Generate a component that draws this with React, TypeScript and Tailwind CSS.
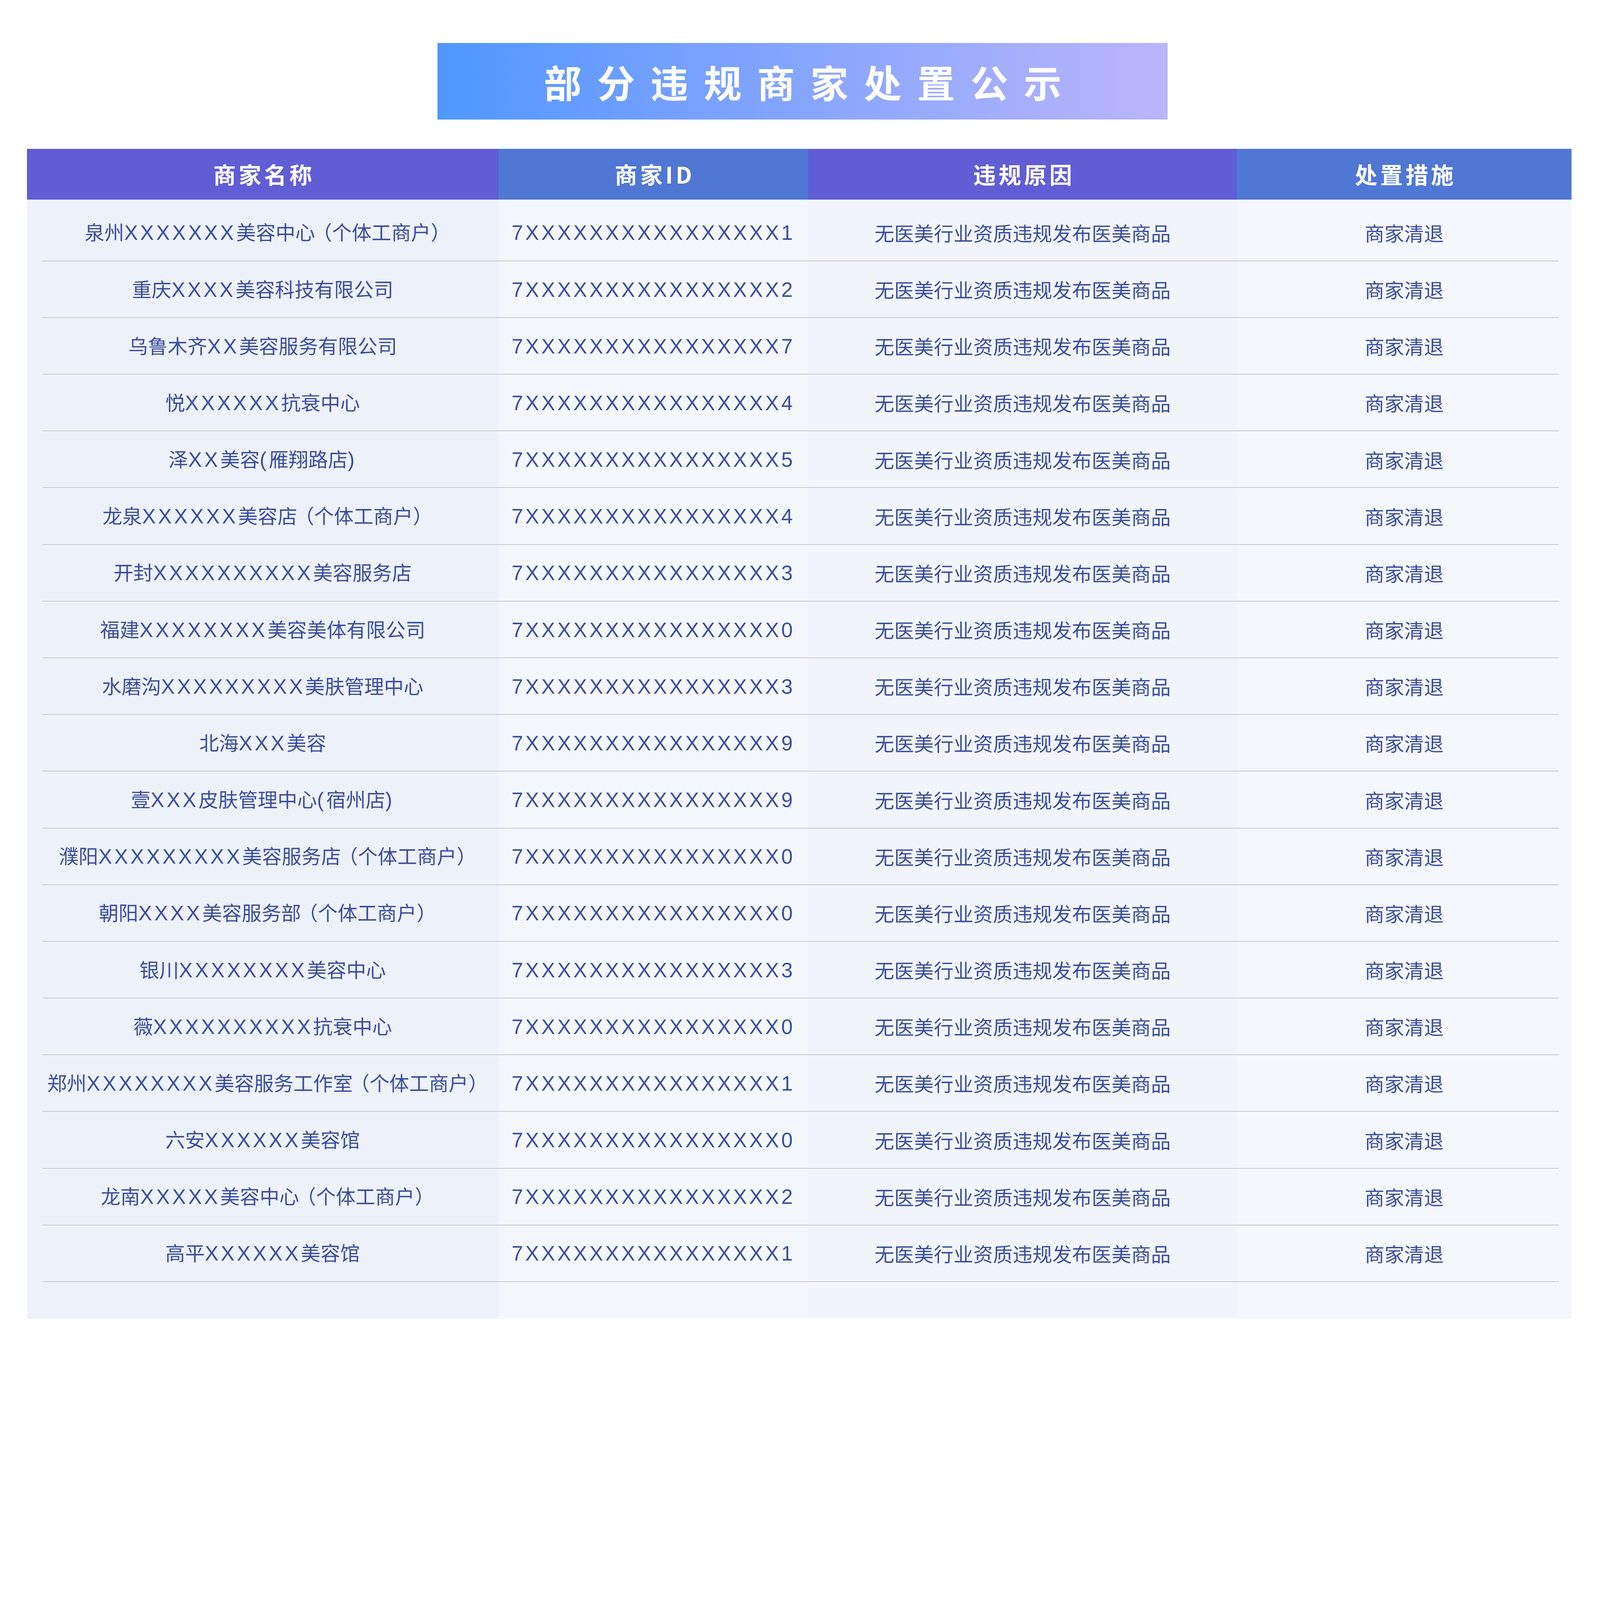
import React from "react";

const names = [
  "泉州XXXXXXX美容中心（个体工商户）",
  "重庆XXXX美容科技有限公司",
  "乌鲁木齐XX美容服务有限公司",
  "悦XXXXXX抗衰中心",
  "泽XX美容(雁翔路店)",
  "龙泉XXXXXX美容店（个体工商户）",
  "开封XXXXXXXXXX美容服务店",
  "福建XXXXXXXX美容美体有限公司",
  "水磨沟XXXXXXXXX美肤管理中心",
  "北海XXX美容",
  "壹XXX皮肤管理中心(宿州店)",
  "濮阳XXXXXXXXX美容服务店（个体工商户）",
  "朝阳XXXX美容服务部（个体工商户）",
  "银川XXXXXXXX美容中心",
  "薇XXXXXXXXXX抗衰中心",
  "郑州XXXXXXXX美容服务工作室（个体工商户）",
  "六安XXXXXX美容馆",
  "龙南XXXXX美容中心（个体工商户）",
  "高平XXXXXX美容馆",
];

const lastDigits = ["1", "2", "7", "4", "5", "4", "3", "0", "3", "9", "9", "0", "0", "3", "0", "1", "0", "2", "1"];

function Mixed({ text }: { text: string }) {
  const parts = text.split(/([\x00-\x7F]+|（|）)/).filter((p) => p.length > 0);
  return (
    <span className="whitespace-nowrap">
      {parts.map((p, i) => {
        if (p === "（") {
          return (
            <span key={i} className="ml-[-10px]">
              {p}
            </span>
          );
        }
        if (p === "）") {
          return (
            <span key={i} className="mr-[-35px]">
              {p}
            </span>
          );
        }
        if (/^[\x00-\x7F]+$/.test(p)) {
          return (
            <span
              key={i}
              className="font-['Liberation_Sans',Arial,sans-serif] text-[73px] tracking-[8px]"
            >
              {p}
            </span>
          );
        }
        return <span key={i}>{p}</span>;
      })}
    </span>
  );
}

const line = "border-b-4 border-[#c9cbce]";

export default function App() {
  const [zoom, setZoom] = React.useState<number>(() =>
    typeof window !== "undefined" ? window.innerWidth / 5671 : 1
  );
  React.useEffect(() => {
    const f = () => setZoom(window.innerWidth / 5671);
    f();
    window.addEventListener("resize", f);
    return () => window.removeEventListener("resize", f);
  }, []);

  return (
    <div className="overflow-hidden">
      <div
        style={{ zoom }}
        className="w-[5671px] h-[4800px] bg-white overflow-hidden font-['Noto_Sans_CJK_SC','Noto_Sans',sans-serif]"
      >
        <div className="pt-[152px]">
          <div className="ml-[1551px] w-[2588px] h-[272px] bg-gradient-to-r from-[#4e97ff] via-[#86a5fd] to-[#bbb5fb] flex items-center justify-center">
            <span className="text-white font-bold text-[134px] leading-none tracking-[55px] pl-[55px]">
              部分违规商家处置公示
            </span>
          </div>
        </div>

        <div className="mt-[104px] ml-[96px] w-[5474px]">
          <div className="grid grid-cols-[1670px_1099px_1519px_1186px] h-[180px] text-white font-bold text-[80px] leading-none">
            <div className="bg-[#615dd4] flex items-center justify-center">
              <span className="tracking-[10px] pl-[10px]">商家名称</span>
            </div>
            <div className="bg-[#5077d4] flex items-center justify-center">
              <span className="tracking-[10px] pl-[10px]">商家ID</span>
            </div>
            <div className="bg-[#615dd4] flex items-center justify-center">
              <span className="tracking-[10px] pl-[10px]">违规原因</span>
            </div>
            <div className="bg-[#5077d4] flex items-center justify-center">
              <span className="tracking-[10px] pl-[10px]">处置措施</span>
            </div>
          </div>

          <div className="grid grid-cols-[1670px_1099px_1519px_1186px] text-[70px] leading-none text-[#3b4e9c]">
            <div className="bg-[#edf1fa] h-[17px]" />
            <div className="bg-[#f3f7fb] h-[17px]" />
            <div className="bg-[#f1f5fb] h-[17px]" />
            <div className="bg-[#f4f7fb] h-[17px]" />

            {names.map((n, i) => (
              <React.Fragment key={i}>
                <div className="bg-[#edf1fa]">
                  <div className={`ml-[53px] pr-[53px] h-[201px] ${line} flex items-center justify-center`}>
                    <Mixed text={n} />
                  </div>
                </div>
                <div className="bg-[#f3f7fb]">
                  <div className={`h-[201px] ${line} flex items-center justify-center`}>
                    <Mixed text={`7XXXXXXXXXXXXXXXX${lastDigits[i]}`} />
                  </div>
                </div>
                <div className="bg-[#f1f5fb]">
                  <div className={`h-[201px] ${line} flex items-center justify-center`}>
                    <span>无医美行业资质违规发布医美商品</span>
                  </div>
                </div>
                <div className="bg-[#f4f7fb]">
                  <div className={`mr-[45px] pl-[45px] h-[201px] ${line} flex items-center justify-center`}>
                    <span>商家清退</span>
                  </div>
                </div>
              </React.Fragment>
            ))}

            <div className="bg-[#edf1fa] h-[131px]" />
            <div className="bg-[#f3f7fb] h-[131px]" />
            <div className="bg-[#f1f5fb] h-[131px]" />
            <div className="bg-[#f4f7fb] h-[131px]" />
          </div>
        </div>
      </div>
    </div>
  );
}
